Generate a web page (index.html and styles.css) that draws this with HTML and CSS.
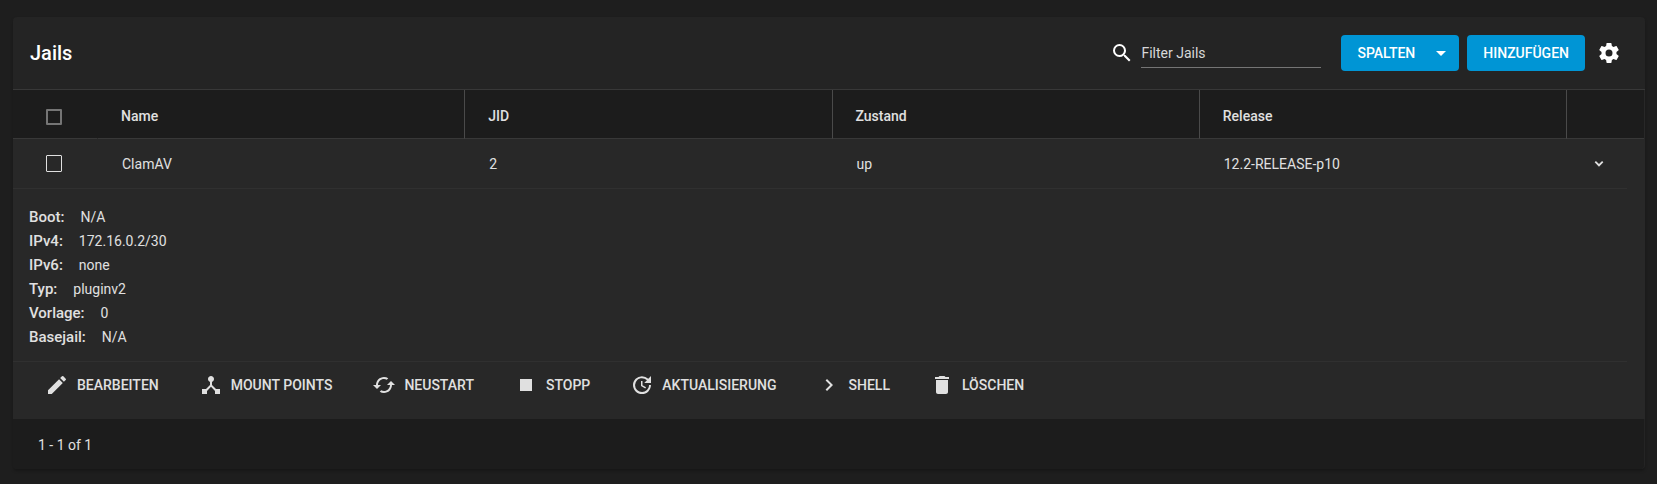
FILE: index.html
```html
<!DOCTYPE html>
<html lang="de">
<head>
    <meta charset="UTF-8">
    <meta name="viewport" content="width=device-width, initial-scale=1.0">
    <title>Jails</title>
    <link rel="stylesheet" href="styles.css">
</head>
<body>
    <main class="card">
        <!-- Toolbar -->
        <header class="toolbar">
            <h1 class="title">Jails</h1>
            <label class="search" for="filter">
                <svg class="icon" viewBox="0 0 24 24"><path d="M9.5 3A6.5 6.5 0 0 1 16 9.5c0 1.61-.59 3.09-1.56 4.23l.27.27h.79l5 5-1.5 1.5-5-5v-.79l-.27-.27A6.516 6.516 0 0 1 9.5 16a6.5 6.5 0 0 1 0-13m0 2C7 5 5 7 5 9.5S7 14 9.5 14 14 12 14 9.5 12 5 9.5 5z"/></svg>
                <input type="text" id="filter" placeholder="Filter Jails">
            </label>
            <button class="btn btn-columns" type="button">Spalten
                <svg class="icon" viewBox="0 0 24 24"><path d="M7 10l5 5 5-5z"/></svg>
            </button>
            <button class="btn" type="button">Hinzufügen</button>
            <button class="icon-btn" type="button" aria-label="Einstellungen">
                <svg class="icon" viewBox="0 0 24 24"><path d="M12 15.5A3.5 3.5 0 0 1 8.5 12 3.5 3.5 0 0 1 12 8.500a3.500 3.500 0 0 1 3.500 3.500 3.500 3.500 0 0 1-3.500 3.500m7.430-2.530c.04-.32.07-.64.07-.97s-.03-.66-.07-1l2.110-1.630c.19-.15.24-.42.12-.64l-2-3.460c-.12-.22-.39-.31-.61-.22l-2.490 1c-.52-.39-1.060-.73-1.690-.98l-.37-2.650A.506.506 0 0 0 14 2h-4c-.25 0-.46.18-.5.42l-.37 2.650c-.63.25-1.170.59-1.690.98l-2.490-1c-.22-.09-.49 0-.61.22l-2 3.460c-.13.22-.07.49.12.64L4.570 11c-.04.34-.07.67-.07 1s.03.65.07.97l-2.110 1.660c-.19.15-.25.42-.12.64l2 3.460c.12.22.39.3.61.22l2.490-1.010c.52.4 1.060.74 1.690.99l.37 2.650c.04.24.25.42.5.42h4c.25 0 .46-.18.5-.42l.37-2.650c.63-.26 1.170-.59 1.690-.99l2.490 1.010c.22.08.49 0 .61-.22l2-3.460c.12-.22.07-.49-.12-.64z"/></svg>
            </button>
        </header>

        <table class="jails">
            <colgroup>
                <col class="col-check">
                <col>
                <col>
                <col>
                <col>
                <col class="col-toggle">
            </colgroup>
            <thead>
                <tr>
                    <th class="check"><input type="checkbox" aria-label="Alle auswählen"></th>
                    <th>Name</th>
                    <th>JID</th>
                    <th>Zustand</th>
                    <th>Release</th>
                    <th></th>
                </tr>
            </thead>
            <tbody>
                <tr class="row">
                    <td class="check"><input type="checkbox" aria-label="ClamAV auswählen"></td>
                    <td>ClamAV</td>
                    <td>2</td>
                    <td>up</td>
                    <td>12.2-RELEASE-p10</td>
                    <td class="toggle">
                        <button class="icon-btn" type="button" aria-label="Details">
                            <svg class="icon-small" viewBox="0 0 24 24"><path d="M7.410 7.500 12 12.100l4.590-4.600L18.500 9.400 12 16 5.500 9.400z"/></svg>
                        </button>
                    </td>
                </tr>
                <tr>
                    <td class="details" colspan="6">
                        <dl class="props">
                            <div><dt>Boot:</dt><dd>N/A</dd></div>
                            <div><dt>IPv4:</dt><dd>172.16.0.2/30</dd></div>
                            <div><dt>IPv6:</dt><dd>none</dd></div>
                            <div><dt>Typ:</dt><dd>pluginv2</dd></div>
                            <div><dt>Vorlage:</dt><dd>0</dd></div>
                            <div><dt>Basejail:</dt><dd>N/A</dd></div>
                        </dl>
                        <div class="actions">
                            <button type="button">
                                <svg class="icon" viewBox="0 0 24 24"><path d="M3 17.250V21h3.750L17.810 9.940l-3.750-3.750zM20.710 7.040a.996.996 0 0 0 0-1.410l-2.340-2.340a.996.996 0 0 0-1.410 0l-1.830 1.830 3.750 3.750z"/></svg>
                                Bearbeiten
                            </button>
                            <button type="button">
                                <svg class="icon" viewBox="0 0 24 24"><path d="M17 16l-4-4V8.820C14.160 8.400 15 7.300 15 6c0-1.660-1.340-3-3-3S9 4.340 9 6c0 1.300.84 2.400 2 2.820V12l-4 4H3v5h5v-3.050l4-4.200 4 4.200V21h5v-5z"/></svg>
                                Mount Points
                            </button>
                            <button type="button">
                                <svg class="icon" viewBox="0 0 24 24"><path d="M19 8l-4 4h3c0 3.310-2.690 6-6 6-1.010 0-1.970-.25-2.800-.7l-1.460 1.460A7.930 7.930 0 0 0 12 20c4.420 0 8-3.580 8-8h3zM6 12c0-3.310 2.690-6 6-6 1.010 0 1.970.25 2.800.7l1.460-1.460A7.930 7.930 0 0 0 12 4c-4.420 0-8 3.580-8 8H1l4 4 4-4z"/></svg>
                                Neustart
                            </button>
                            <button type="button">
                                <svg class="icon" viewBox="0 0 24 24"><path d="M6 6h12v12H6z"/></svg>
                                Stopp
                            </button>
                            <button type="button">
                                <svg class="icon" viewBox="0 0 24 24"><path d="M21 10.120h-6.780l2.740-2.820c-2.730-2.700-7.150-2.800-9.880-.1a6.875 6.875 0 0 0 0 9.790 7.020 7.020 0 0 0 9.880 0C18.320 15.650 19 14.080 19 12.100h2c0 1.980-.88 4.550-2.640 6.290-3.510 3.480-9.210 3.480-12.720 0-3.500-3.470-3.530-9.110-.02-12.580a8.987 8.987 0 0 1 12.650 0L21 3zM12.500 8v4.250l3.500 2.080-.72 1.210L11 13V8z"/></svg>
                                Aktualisierung
                            </button>
                            <button type="button">
                                <svg class="icon" viewBox="0 0 24 24"><path d="M8.590 16.580 13.170 12 8.590 7.410 10 6l6 6-6 6z"/></svg>
                                Shell
                            </button>
                            <button type="button">
                                <svg class="icon" viewBox="0 0 24 24"><path d="M6 19c0 1.100.9 2 2 2h8c1.100 0 2-.9 2-2V7H6zM19 4h-3.500l-1-1h-5l-1 1H5v2h14z"/></svg>
                                Löschen
                            </button>
                        </div>
                    </td>
                </tr>
            </tbody>
        </table>

        <footer class="pager">1 - 1 of 1</footer>
    </main>
</body>
</html>
```
FILE: styles.css
```css
* {
    margin: 0;
    padding: 0;
    box-sizing: border-box;
}

body {
    background: #1e1e1e;
    color: #e0e0e0;
    font-family: Roboto, "Liberation Sans", sans-serif;
    font-size: 14px;
    line-height: 24px;
}

button,
input {
    font: inherit;
    color: inherit;
}

button {
    border: none;
    background: none;
    cursor: pointer;
}

svg {
    display: block;
    fill: currentColor;
}

.icon {
    width: 24px;
    height: 24px;
}

.icon-small {
    width: 16px;
    height: 16px;
}

.card {
    margin: 17px 12px 15px 13px;
    background: #242424;
    border-radius: 4px;
    box-shadow: 0 2px 3px rgba(0, 0, 0, 0.25);
}

/* Toolbar */
.toolbar {
    display: flex;
    align-items: center;
    gap: 8px;
    height: 73px;
    padding: 0 24px 0 17px;
    border-bottom: 1px solid #383838;
}

.title {
    flex: 1;
    font-size: 20px;
    font-weight: 500;
    color: #fff;
}

.search {
    display: flex;
    align-items: center;
    gap: 7px;
    margin-right: 12px;
    color: #fff;
}

.search input {
    width: 180px;
    height: 30px;
    border: none;
    border-bottom: 1px solid #757575;
    background: none;
    outline: none;
    color: #e0e0e0;
}

.search input::placeholder {
    color: #d8d8d8;
    opacity: 1;
}

.btn {
    height: 36px;
    padding: 0 16px;
    border-radius: 4px;
    background: #0095d5;
    color: #fff;
    font-weight: 500;
    text-transform: uppercase;
}

.btn-columns {
    display: flex;
    align-items: center;
    gap: 14px;
    padding-right: 6px;
}

.icon-btn {
    color: #fff;
}

.toolbar .icon-btn {
    margin-left: 4px;
}

/* Table */
.jails {
    width: calc(100% - 1px);
    table-layout: fixed;
    border-collapse: separate;
    border-spacing: 0;
    background: #282828;
    box-shadow: 1px 0 #282828;
}

.col-check {
    width: 84px;
}

.col-toggle {
    width: 78px;
}

th {
    height: 49px;
    padding: 4px 23px 0;
    border-left: 1px solid #4a4a4a;
    border-bottom: 1px solid #383838;
    background: #1c1c1c;
    font-weight: 500;
    text-align: left;
}

th:first-child {
    border-left: none;
}

th:nth-child(2) {
    border-left-color: transparent;
    background-clip: border-box;
}

.row td {
    height: 49px;
    padding: 0 25px;
}

.jails .check {
    padding-left: 33px;
}

.check input {
    display: block;
    appearance: none;
    width: 16px;
    height: 17px;
    border: 1px solid #e0e0e0;
    border-radius: 1px;
}

.jails th.check {
    padding-top: 6px;
}

th.check input {
    height: 16px;
    border: 2px solid #757575;
}

.toggle .icon-btn {
    display: block;
    color: #e0e0e0;
}

.details {
    padding-right: 17px;
}

.props {
    padding: 16px 16px 12px;
    border-top: 1px solid #303030;
}

.props div {
    display: flex;
    gap: 16px;
}

.props dt {
    font-size: 15px;
    font-weight: 500;
}

.actions {
    display: flex;
    gap: 8px;
    padding: 5px 16px 16px;
    border-top: 1px solid #303030;
}

.actions button {
    display: flex;
    align-items: center;
    gap: 8px;
    height: 36px;
    padding: 0 16px;
    font-weight: 500;
    text-transform: uppercase;
}

/* Pager */
.pager {
    height: 50px;
    margin-right: 1px;
    padding: 14px 25px;
    border-radius: 0 0 4px 4px;
    background: #1c1c1c;
}
```
